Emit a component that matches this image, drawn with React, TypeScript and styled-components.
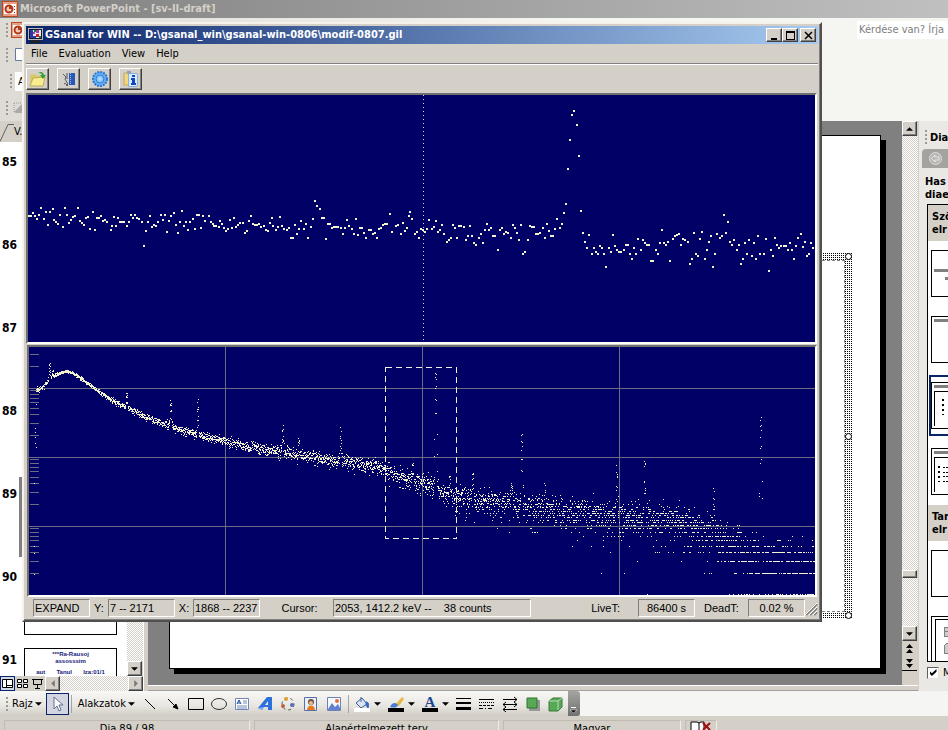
import React from "react";
import styled, { createGlobalStyle, css } from "styled-components";

const ui = `"DejaVu Sans Condensed", "DejaVu Sans", sans-serif`;
const sans = `"Liberation Sans", Arial, sans-serif`;
const face = "#d4d0c8";
const navy = "#000066";
const dot = "#f2f2cc";

const GlobalStyle = createGlobalStyle`
  * { box-sizing: border-box; }
  body { margin: 0; font: 11px/14px ${ui}; color: #000; background: ${face}; overflow: hidden; }
  button, input { font: inherit; color: inherit; margin: 0; padding: 0; border: 0; background: none; }
  svg { display: block; flex: none; }
`;

const checker = css`
  background: conic-gradient(#fff 25%, ${face} 0 50%, #fff 0 75%, ${face} 0) 0 0 / 2px 2px;
`;
const raised = css`
  background: ${face};
  border: 1px solid;
  border-color: #fff #404040 #404040 #fff;
  box-shadow: inset -1px -1px 0 #808080;
`;

/* ---------- host application ---------- */
const Screen = styled.div`
  position: relative;
  display: flex;
  flex-direction: column;
  height: 100vh;
  overflow: hidden;
`;
const HostTitle = styled.header`
  display: flex;
  align-items: center;
  gap: 2px;
  height: 18px;
  flex: none;
  padding-left: 2px;
  background: linear-gradient(90deg, #808080, #c0c0c0);
  color: ${face};
  font: bold 11px/18px ${ui};
`;
const Bars = styled.div`
  flex: none;
  display: flex;
  flex-direction: column;
  background: linear-gradient(90deg, #dedbd5, #f5f5f2 60%);
`;
const BarRow = styled.div<{ $h: number; $indent: number }>`
  display: flex;
  align-items: center;
  height: ${(p) => p.$h}px;
  padding-left: ${(p) => p.$indent}px;
  gap: 3px;
`;
const Grip = styled.span`
  width: 2px;
  height: 14px;
  flex: none;
  background: repeating-linear-gradient(#999 0 2px, transparent 2px 4px);
`;
const FontBox = styled.input`
  width: 90px;
  height: 19px;
  padding-left: 3px;
  background: #fff;
`;
const AskBox = styled.input`
  margin-left: auto;
  width: 91px;
  height: 18px;
  padding-left: 2px;
  background: #fff;
  font: 11px/18px ${ui};
  &::placeholder { color: #808080; opacity: 1; }
`;
const Work = styled.div`
  display: flex;
  flex: 1;
  min-height: 0;
`;
const Outline = styled.aside`
  display: flex;
  flex-direction: column;
  width: 143px;
  flex: none;
`;
const TabStrip = styled.div`
  height: 21px;
  flex: none;
  background: ${face};
  display: flex;
  align-items: center;
`;
const Tab = styled.button`
  display: flex;
  align-items: center;
  height: 21px;
`;
const ListRow = styled.div`
  display: flex;
  flex: 1;
  min-height: 0;
`;
const SlideList = styled.ol`
  list-style: none;
  flex: 1;
  margin: 0;
  padding: 8px 0 0 2px;
  background: #fff;
  overflow: hidden;
`;
const SlideItem = styled.li<{ $active?: boolean }>`
  display: flex;
  gap: 4px;
  height: 83px;
  font: bold 12px/24px ${ui};
  & > span { width: 18px; flex: none; }
  & > div { box-shadow: ${(p) => (p.$active ? "0 0 0 5px #808080" : "none")}; }
`;
const Thumb = styled.div`
  width: 93px;
  height: 70px;
  border: 1px solid #000;
  background: #fff;
  overflow: hidden;
  color: #20207a;
  font: bold 6px/7px ${sans};
  text-align: center;
  padding-top: 2px;
`;
const ThumbLine = styled.div<{ $gap?: boolean }>`
  display: flex;
  justify-content: space-evenly;
  margin-top: ${(p) => (p.$gap ? 4 : 0)}px;
`;
const VScroll = styled.div`
  display: flex;
  flex-direction: column;
  width: 16px;
  flex: none;
  background: ${face};
`;
const Track = styled.div<{ $len?: number }>`
  flex: ${(p) => (p.$len ? `0 0 ${p.$len}px` : "1")};
  ${checker}
`;
const ScrollButton = styled.button<{ $h?: number; $flat?: boolean; $line?: boolean }>`
  display: flex;
  align-items: center;
  justify-content: center;
  width: 15px;
  height: ${(p) => p.$h ?? 15}px;
  flex: none;
  ${raised}
  ${(p) => p.$flat && css`border: 0; box-shadow: none;`}
  ${(p) => p.$line && css`border-bottom: 1px solid #000;`}
`;
const ViewRow = styled.div`
  display: flex;
  height: 15px;
  flex: none;
  background: ${face};
`;
const ViewButton = styled.button<{ $on?: boolean }>`
  display: flex;
  align-items: center;
  justify-content: center;
  width: 15px;
  height: 15px;
  border: ${(p) => (p.$on ? "1px solid #0a246a" : "0")};
  background: ${(p) => (p.$on ? "#d2d7e4" : face)};
`;
const Center = styled.main`
  display: flex;
  flex-direction: column;
  flex: 1;
  min-width: 0;
  border-left: 1px solid #fff;
  background: ${face};
  padding-left: 4px;
`;
const StageRow = styled.div`
  display: flex;
  flex: 1;
  min-height: 0;
`;
const Stage = styled.div`
  display: flex;
  flex: 1;
  padding: 14px 21px 16px 21px;
  background: #808080;
`;
const Slide = styled.section`
  position: relative;
  flex: 1;
  background: #fff;
  border: 1px solid #000;
  box-shadow: 5px 5px 0 #000;
  clip-path: polygon(0 0, 100% 0, 100% 4px, calc(100% + 5px) 4px, calc(100% + 5px) calc(100% + 5px), 4px calc(100% + 5px), 4px 100%, 0 100%);
`;
const Placeholder = styled.div`
  position: absolute;
  left: 28px;
  right: 28px;
  top: 117px;
  bottom: 49px;
  background: conic-gradient(#000 25%, #fff 0 50%, #fff 0 75%, #fff 0) 0 0 / 2px 2px;
  padding: 7px;
`;
const PlaceholderInner = styled.div`
  height: 100%;
  background: #fff;
  border: 1px dashed #808080;
`;
const Handle = styled.i<{ $at: string }>`
  position: absolute;
  right: 0;
  top: ${(p) => p.$at};
  width: 7px;
  height: 7px;
  margin-top: -3px;
  border: 1px solid #000;
  border-radius: 50%;
  background: #fff;
`;
const Ledge = styled.div`
  height: 6px;
  flex: none;
  border-top: 1px solid #fff;
  border-bottom: 1px solid #a0a0a0;
  background: ${face};
`;
const TaskPane = styled.aside`
  width: 30px;
  flex: none;
  overflow: hidden;
  background: #eae8e4;
  padding-left: 3px;
  border-left: 1px solid #d4d0c8;
  font: bold 11px/13px ${ui};
  white-space: nowrap;
`;
const PaneTitle = styled.div`
  display: flex;
  align-items: center;
  gap: 3px;
  height: 28px;
  padding: 4px 0 0 3px;
`;
const PaneNav = styled.div`
  height: 19px;
  display: flex;
  align-items: center;
  padding-left: 7px;
  background: #a5a39f;
  border-top-left-radius: 4px;
`;
const PaneLabel = styled.div`
  padding: 7px 0 3px 3px;
  height: 36px;
`;
const PaneList = styled.div`
  margin-left: 5px;
  height: 458px;
  border: 1px solid #000;
  border-right: 0;
  background: #fff;
  display: flex;
  flex-direction: column;
  overflow: hidden;
`;
const PaneHead = styled.div<{ $gap?: number }>`
  height: 36px;
  flex: none;
  margin-top: ${(p) => p.$gap ?? 0}px;
  padding: 5px 0 0 4px;
  background: ${face};
`;
const Layout = styled.button<{ $gap: number; $on?: boolean }>`
  flex: none;
  display: block;
  width: 40px;
  height: ${(p) => (p.$on ? 61 : 47)}px;
  margin: ${(p) => p.$gap}px 0 0 ${(p) => (p.$on ? 1 : 3)}px;
  border: ${(p) => (p.$on ? "2px solid #0a246a" : "0")};
  padding: ${(p) => (p.$on ? "5px 0 5px 0" : "0")};
  overflow: hidden;
`;
const PaneCheck = styled.label`
  display: flex;
  align-items: center;
  gap: 4px;
  padding: 4px 0 0 5px;
  font: 11px/13px ${ui};
  input {
    appearance: none;
    width: 12px;
    height: 12px;
    flex: none;
    background: #fff;
    border: 1px solid;
    border-color: #606060 #e0e0e0 #e0e0e0 #606060;
    display: grid;
    place-items: center;
  }
  input:checked::before {
    content: "";
    width: 7px;
    height: 7px;
    background: #000;
    clip-path: polygon(0 30%, 35% 60%, 100% 0, 100% 40%, 35% 100%, 0 65%);
  }
`;

const DrawBar = styled.div`
  display: flex;
  flex: none;
  height: 25px;
  background: #f5f5f3;
`;
const DrawTools = styled.div`
  display: flex;
  align-items: center;
  padding-left: 6px;
  background: linear-gradient(#f8f8f6, #e8e6e1 60%, #d0ccc4);
`;
const TextTool = styled.button`
  display: flex;
  align-items: center;
  gap: 2px;
  height: 22px;
  padding: 0 4px;
  font: 11px/22px ${ui};
  white-space: nowrap;
`;
const Tool = styled.button<{ $on?: boolean; $w?: number }>`
  display: flex;
  align-items: center;
  justify-content: center;
  gap: 4px;
  width: ${(p) => p.$w ?? 23}px;
  height: 22px;
  flex: none;
  border: ${(p) => (p.$on ? "1px solid #0a246a" : "0")};
  background: ${(p) => (p.$on ? "#d3d6e0" : "none")};
`;
const Rule = styled.span`
  width: 1px;
  height: 18px;
  margin: 0 2px;
  background: #a8a6a0;
`;
const EndCap = styled.button`
  display: flex;
  align-items: flex-end;
  justify-content: center;
  width: 12px;
  height: 25px;
  padding-bottom: 2px;
  background: linear-gradient(#a5a5a0, #707070);
  border-radius: 0 3px 3px 0;
`;
const HostStatus = styled.footer`
  display: flex;
  gap: 4px;
  flex: none;
  height: 14px;
  overflow: hidden;
  padding: 4px 0 0 4px;
  background: ${face};
`;
const StatusCell = styled.div<{ $w: number }>`
  width: ${(p) => p.$w}px;
  height: 20px;
  flex: none;
  border: 1px solid;
  border-color: #c0bcb4 #f0eeea #f0eeea #c0bcb4;
  text-align: center;
  line-height: 15px;
  display: flex;
  justify-content: center;
`;

/* ---------- analyser window ---------- */
const Window = styled.section`
  position: absolute;
  left: 22px;
  top: 22px;
  width: calc(100vw - 148px);
  padding: 2px;
  background: ${face};
  border: 2px solid;
  border-color: #f4f2ea #505050 #505050 #f4f2ea;
  box-shadow: inset -1px -1px 0 #808080;
`;
const WinTitle = styled.header`
  display: flex;
  align-items: center;
  gap: 2px;
  height: 18px;
  padding: 0 2px;
  background: linear-gradient(90deg, #0a246a, #a6caf0);
  color: #fff;
  font: bold 11px/18px ${ui};
`;
const WinName = styled.span`
  flex: 1;
  white-space: nowrap;
`;
const Caption = styled.button<{ $apart?: boolean }>`
  display: flex;
  align-items: center;
  justify-content: center;
  width: 16px;
  height: 14px;
  margin-left: ${(p) => (p.$apart ? 2 : 0)}px;
  ${raised}
`;
const CaptionGroup = styled.div`
  display: flex;
`;
const Menu = styled.nav`
  display: flex;
  height: 20px;
  border-bottom: 1px solid #808080;
  font: 11px/20px ${ui};
`;
const MenuItem = styled.button`
  padding: 0 6px 0 5px;
`;
const Tools = styled.div`
  display: flex;
  align-items: center;
  gap: 8px;
  height: 29px;
  border-top: 1px solid #fff;
`;
const BigTool = styled.button`
  display: flex;
  align-items: center;
  justify-content: center;
  width: 23px;
  height: 22px;
  ${raised}
`;
const PlotFrame = styled.div<{ $inset?: boolean }>`
  margin: 0 1px 1px ${(p) => (p.$inset ? 1 : 0)}px;
  border: 2px solid;
  border-color: #707070 #fff #fff #707070;
  background: ${navy};
`;
const Plot = styled.svg`
  width: 100%;
  shape-rendering: crispEdges;
`;
const WinStatus = styled.footer`
  display: flex;
  align-items: center;
  height: 20px;
  padding: 0 0 0 7px;
  font: 11px/16px ${sans};
`;
const Field = styled.output<{ $w: number; $center?: boolean }>`
  width: ${(p) => p.$w}px;
  height: 18px;
  flex: none;
  padding-left: ${(p) => (p.$center ? 0 : 1)}px;
  text-align: ${(p) => (p.$center ? "center" : "left")};
  border: 1px solid;
  border-color: #808080 #fff #fff #808080;
  white-space: pre;
`;
const FieldLabel = styled.label<{ $w?: number }>`
  flex: ${(p) => (p.$w ? `0 0 ${p.$w}px` : "1")};
  padding-right: ${(p) => (p.$w ? 0 : 18)}px;
  text-align: ${(p) => (p.$w ? "center" : "right")};
`;

/* Upper plot: expanded region, points in thirds of a pixel. */
const leftHalf =
  "85,288 91,288 98,279 104,288 110,297 116,285 122,264 131,297 137,276 143,315 149,276 156,267 161,300 167,306 173,312 179,285 188,321 194,264 200,285 206,309 212,300 218,291 224,290 233,264 239,303 245,309 251,315 257,296 263,291 269,327 276,276 284,330 290,294 296,294 302,288 308,303 314,300 320,306 330,330 335,318 341,291 347,318 353,296 359,306 365,306 371,306 380,318 386,306 392,285 398,294 404,287 410,296 416,297 425,306 431,378 437,333 443,306 449,288 455,321 461,315 467,318 473,306 481,285 487,300 494,285 500,336 506,303 512,290 521,279 527,315 533,339 539,306 545,273 551,318 557,306 563,330 569,306 578,297 584,327 590,285 596,287 602,324 608,288 614,303 624,288 630,306 636,312 641,318 647,320 654,321 657,303 663,312 669,324 675,333 681,327 687,300 693,324 699,296 705,321 711,315 717,309 726,309 732,339 738,333 744,303 750,288 756,312 762,315 768,315 774,312 780,321 789,318 795,330 801,333 807,309 815,294 818,318 827,330 833,321 839,291 845,318 851,327 860,330 866,324 872,354 878,354 884,315 890,342 896,327 902,303 911,327 917,312 923,354 930,321 936,297 942,243 948,258 957,267 963,294 969,296 975,357 981,312 987,312 993,326 999,321 1005,321 1012,321 1020,326 1026,342 1032,324 1038,300 1044,318 1053,327 1059,342 1065,297 1071,345 1077,326 1083,326 1089,339 1095,354 1104,330 1110,330 1116,342 1122,339 1128,354 1134,327 1140,326 1146,315 1152,312 1160,312 1167,282 1173,336 1185,318 1191,317 1200,342 1206,309 1212,333 1218,324 1224,288";
const rightHalf =
  "1,366 6,387 15,432 21,426 27,444 33,417 39,422 45,426 51,417 57,390 66,417 72,411 78,393 84,426 90,420 96,405 102,432 111,456 117,450 123,444 129,405 135,414 141,444 147,408 153,408 162,411 168,450 174,438 180,408 186,438 192,459 198,465 207,444 213,432 219,459 225,420 231,402 237,420 243,414 249,438 257,438 264,480 270,420 276,414 282,432 288,426 294,429 303,444 309,405 315,414 321,429 327,450 333,405 339,492 345,486 354,450 360,408 366,413 372,413 378,432 384,432 390,429 399,414 405,444 411,402 417,423 423,438 429,438 435,417 441,387 450,414 456,402 462,369 468,342 474,237 480,150 486,75 492,63 501,105 507,198 513,363 519,429 525,456 531,474 537,435 546,492 552,474 558,486 564,492 570,468 576,474 582,492 588,531 597,474 603,486 609,435 615,468 621,480 627,486 633,486 642,480 648,465 654,465 660,492 666,507 672,474 678,492 684,447 693,480 699,450 705,459 711,465 717,465 723,513 729,513 738,480 744,492 750,459 756,420 762,459 768,465 774,456 780,513 789,447 795,438 801,435 807,432 813,465 819,447 825,450 834,456 840,522 846,507 852,429 858,492 864,498 870,447 876,426 885,507 891,480 897,456 903,438 909,531 915,492 921,432 930,444 936,438 942,375 948,429 954,396 960,456 966,465 972,450 981,480 987,465 993,522 999,507 1005,459 1011,492 1017,450 1026,498 1032,459 1038,507 1044,438 1050,492 1062,492 1068,447 1077,543 1083,480 1089,498 1095,444 1101,465 1107,474 1113,468 1122,468 1128,468 1134,480 1140,459 1146,480 1152,507 1158,468 1164,444 1173,432 1179,472 1185,456 1191,498 1197,492 1203,459 1209,474";

const dotsFrom = (src: string, dx: number, dy: number) =>
  src
    .split(" ")
    .map((pair) => {
      const [x, y] = pair.split(",").map(Number);
      return `M${Math.floor(x / 3) + dx} ${Math.floor(y / 3) + dy}h2v2h-2z`;
    })
    .join("");
const expandedPath = dotsFrom(leftHalf, -28, 24) + dotsFrom(rightHalf, 381, -6);

/* Lower plot: 4096 channels on a logarithmic count axis, 69px per decade. */
const DECADE = 69;
const BASE = 248;
const yOf = (n: number) => Math.round(BASE - DECADE * Math.log10(n)) - 1;
const countsAt = (y: number) => Math.pow(10, (BASE - y) / DECADE);

const continuum: [number, number][] = [
  [8, 43], [11, 43], [16, 38], [21, 33], [28, 28], [36, 25], [43, 26], [51, 31], [61, 38], [71, 46],
  [86, 55], [101, 63], [116, 70], [131, 76], [151, 83], [171, 89], [196, 95], [221, 100], [251, 105],
  [281, 111], [311, 115], [346, 119], [356, 124], [371, 130], [391, 136], [409, 142], [414, 148],
  [431, 150], [451, 154], [471, 157], [491, 160], [531, 165], [571, 168], [611, 173], [651, 175],
  [671, 181], [691, 192], [711, 204], [729, 213], [745, 221], [786, 229],
];
const peaks: [number, number][] = [
  [21, 18], [24, 24], [98, 47], [142, 55], [169, 56], [254, 81], [270, 94], [312, 86], [384, 115],
  [407, 27], [421, 128], [444, 130], [493, 90], [483, 136], [516, 142], [588, 125], [616, 117],
  [685, 148], [732, 73],
];
const background = (x: number) => {
  for (let i = 1; i < continuum.length; i++) {
    const [x1, y1] = continuum[i];
    if (x <= x1) {
      const [x0, y0] = continuum[i - 1];
      return countsAt(y0 + ((y1 - y0) * (x - x0)) / (x1 - x0));
    }
  }
  return 2;
};
const makeSpectrum = () => {
  let seed = 20806;
  const rnd = () => {
    seed = (seed * 1664525 + 1013904223) % 4294967296;
    return (seed + 1) / 4294967297;
  };
  let d = "";
  for (let ch = 40; ch < 4086; ch++) {
    const x = ch * 0.1923;
    const floor = background(x);
    let mean = floor;
    for (const [px, py] of peaks) {
      const t = (x - px) / 0.5;
      if (Math.abs(t) < 4) mean += Math.max(0, countsAt(py) - floor) * Math.exp((-t * t) / 2);
    }
    const g = Math.sqrt(-2 * Math.log(rnd())) * Math.cos(2 * Math.PI * rnd());
    const n = Math.round(mean + g * Math.sqrt(mean) * 1.05);
    if (n >= 1) d += `M${Math.floor(x)} ${yOf(n)}h1v1h-1z`;
  }
  for (const [x, y] of [[5, 136], [5, 199], [5, 206], [5, 227], [6, 81], [6, 85], [6, 90], [6, 96], [7, 57], [7, 100]])
    d += `M${x} ${y}h1v1h-1z`;
  return d;
};
const spectrumPath = makeSpectrum();
const ticks = [0, 1, 2, 3].flatMap((dec) => [2, 3, 4, 5, 6, 7, 8, 9].map((k) => yOf(k * 10 ** dec))).filter((y) => y > 3);

/* ---------- icons ---------- */
const Caret = ({ dir = "down" }: { dir?: "down" | "up" | "left" | "right" }) => {
  const d = { down: "M0 0h6L3 3z", up: "M0 3h6L3 0z", left: "M3 0v6L0 3z", right: "M0 0v6l3-3z" }[dir];
  const tall = dir === "left" || dir === "right";
  return (
    <svg width={tall ? 4 : 7} height={tall ? 7 : 4} viewBox={tall ? "0 0 3 6" : "0 0 6 3"}>
      <path d={d} fill={tall ? "#777" : "#000"} />
    </svg>
  );
};
const PptIcon = () => (
  <svg width="16" height="16" viewBox="0 0 16 16">
    <rect x="0.5" y="0.5" width="15" height="15" fill="#e8a088" stroke="#b84820" />
    <rect x="2" y="3" width="12" height="10" fill="#fff" />
    <circle cx="7" cy="8" r="3.500" fill="#f4c8b8" stroke="#b03818" strokeWidth="2" />
    <path d="M7 8V4l4 4z" fill="#b03818" />
    <path d="M12.500 5v7" stroke="#803018" strokeDasharray="1 2" />
  </svg>
);
const MonitorIcon = () => (
  <svg width="15" height="16" viewBox="0 0 15 16" shapeRendering="crispEdges">
    <path d="M0 1h15v12H0z" fill="#b8b8b8" />
    <path d="M1 2h13v10H1z" fill="#181830" />
    <path d="M2 3h11v8H2z" fill="#e8e8f0" />
    <path d="M2 3h3v8H2zM5 9h3v2H5z" fill="#2838a8" />
    <path d="M8 3h3v3H8zM5 5h2v2H5z" fill="#a040a0" />
    <path d="M8 7h3v3H8z" fill="#d02020" />
    <path d="M6 3h2v2H6zM11 9h2v2h-2z" fill="#108040" />
    <path d="M5 13h5v1H5zM2 14h11v2H2z" fill="#202020" />
  </svg>
);
const OpenIcon = () => (
  <svg width="18" height="18" viewBox="0 0 18 18">
    <path d="M1 5l5-1 2 2h5v10H2z" fill="#d8c868" />
    <path d="M1 16L4 8l12-1-2 9z" fill="#f8ee90" stroke="#c0aa50" />
    <path d="M9 3c3-2 5-1 6 2h2l-3 4-3-4h2c-1-2-2-2-4-2z" fill="#30a030" />
  </svg>
);
const CalibIcon = () => (
  <svg width="16" height="16" viewBox="0 0 16 16">
    <rect x="8" y="2" width="6" height="12" fill="#2858b8" />
    <path d="M9.500 2v12" stroke="#a8c0f0" strokeDasharray="1 1" />
    <path d="M2 3l3 3-1 2 3 5M3 13l2-1M6 2v6" stroke="#556" fill="none" />
    <circle cx="6" cy="14" r="1" fill="#334" />
  </svg>
);
const GearIcon = () => (
  <svg width="18" height="18" viewBox="0 0 18 18">
    <circle cx="9" cy="9" r="7" fill="#68b0f4" stroke="#2878d8" strokeWidth="2" strokeDasharray="2 1" />
    <circle cx="9" cy="9" r="4" fill="#88c4f8" stroke="#3080d8" />
    <path d="M7 9h4M9 7v4" stroke="#c0e0ff" />
  </svg>
);
const InfoIcon = () => (
  <svg width="18" height="18" viewBox="0 0 18 18">
    <path d="M2 3h7v12H2z" fill="#f0d880" stroke="#c8a850" />
    <path d="M6.500 3.500h9v13h-9z" fill="#d8ecfc" stroke="#88b0d8" />
    <path d="M5 1h4v3H5z" fill="#90a0c0" />
    <path d="M10 5h3v2h-3zM9 8h4v5h1v2H9v-2h1v-3H9z" fill="#1048c0" />
  </svg>
);
const shapes: Record<string, React.ReactNode> = {
  cursor: <path d="M5 1v12l3-3 2 5 2-1-2-5h4z" fill="#fff" stroke="#607090" />,
  line: <path d="M3 3l10 10" stroke="#000" />,
  arrow: <path d="M3 3l8 8M13 13l-5-2 3-3z" stroke="#000" />,
  rect: <path d="M.5 2.500h15v11H.5z" fill="none" stroke="#000" />,
  oval: <ellipse cx="8" cy="8" rx="7.500" ry="5.500" fill="none" stroke="#333" />,
  text: (
    <>
      <path d="M1.500 2.500h13v11h-13z" fill="#fff" stroke="#7088b8" />
      <path d="M3 8l2-4 2 4M4 7h2" fill="none" stroke="#1040a0" />
      <path d="M9 5h4M9 7h4M3 10h10M3 12h10" stroke="#7088b8" />
    </>
  ),
  wordart: (
    <>
      <path d="M1 12L10 1h5v13h-4v-3H7l-2 3zM8 9h3V5z" fill="#2c70dc" fillRule="evenodd" />
      <path d="M1 12l4 2 2-3" fill="#80b0f0" />
    </>
  ),
  cycle: (
    <>
      <circle cx="8" cy="8" r="6" fill="none" stroke="#555" strokeDasharray="3 3" />
      <circle cx="6" cy="3" r="2" fill="#e0a030" />
      <circle cx="3" cy="10" r="2" fill="#c06040" />
      <circle cx="12" cy="9" r="2" fill="#5070b8" />
    </>
  ),
  clip: (
    <>
      <path d="M1.500 1.500h12v13h-12z" fill="#e8eef8" stroke="#5870a8" />
      <circle cx="8" cy="6" r="3" fill="#705038" />
      <circle cx="8" cy="7" r="2" fill="#e8b890" />
      <path d="M4 14c0-6 8-6 8 0z" fill="#e87820" />
    </>
  ),
  picture: (
    <>
      <path d="M1.500 1.500h13v13h-13z" fill="#f4f8ff" stroke="#7080b0" />
      <path d="M2 13l4-6 3 4 3-3 2 4v2H2z" fill="#6080d0" />
      <circle cx="11" cy="5" r="2" fill="#e07040" />
    </>
  ),
  bucket: (
    <>
      <path d="M2 7l6-5 5 6-6 4z" fill="#d8e4f4" stroke="#405888" />
      <path d="M7 1v5M12 6c3 0 3 3 2 6-2-2-2-4-2-6z" fill="#3868c0" stroke="#3868c0" />
      <path d="M0 12h16v4H0z" fill="#fff" />
    </>
  ),
  brush: (
    <>
      <path d="M8 8l6-7 2 2-5 7z" fill="#e8b840" />
      <path d="M2 11c2-5 6-5 8-2-1 3-4 3-8 2z" fill="#4878d0" />
      <path d="M0 12h16v4H0z" />
    </>
  ),
  fontcolor: (
    <>
      <text x="8" y="11" textAnchor="middle" fontFamily="Liberation Serif, serif" fontWeight="bold" fontSize="15" fill="#1f4890">A</text>
      <path d="M0 12h16v4H0z" />
    </>
  ),
  weight: (
    <g fill="#000" shapeRendering="crispEdges">
      <path d="M0 2h15v1H0zM0 6h15v2H0zM0 11h15v3H0z" />
    </g>
  ),
  dash: (
    <g stroke="#000" shapeRendering="crispEdges">
      <path d="M0 3.500h15" />
      <path d="M0 6.500h15" strokeDasharray="1 1" />
      <path d="M0 9.500h15" strokeDasharray="3 1" />
      <path d="M0 12.500h15" strokeDasharray="4 2 1 2" />
    </g>
  ),
  arrows: <path d="M1 3.500h14M12 1l3 2.500L12 6M1 8.500h14M12 6l3 2.500L12 11M4 6L1 8.500 4 11M1 13.500h14M4 11l-3 2.500L4 16" fill="none" stroke="#000" />,
  shadow: (
    <>
      <path d="M4 4h11v11H4z" fill="#999" />
      <path d="M2 2h10v10H2z" fill="#58a858" stroke="#287828" />
    </>
  ),
  cube: (
    <>
      <path d="M1 5l4-3h9v9l-4 4H1z" fill="#58a858" stroke="#387838" />
      <path d="M1 5h9v9M10 5l4-3" fill="none" stroke="#b0e0b0" />
    </>
  ),
};
const Shape = ({ name }: { name: string }) => (
  <svg width="16" height="16" viewBox="0 0 16 16">{shapes[name]}</svg>
);

const LayoutArt = ({ kind }: { kind: "title" | "head" | "bullets" | "columns" | "blank" | "content" }) => (
  <svg width="60" height="47" viewBox="0 0 60 47" shapeRendering="crispEdges">
    <path d="M.5.5h59v46H.5z" fill="#fff" stroke="#000" />
    {kind === "title" && <path d="M3 20h50M14 28h30" stroke="#808080" strokeWidth="3" />}
    {(kind === "head" || kind === "bullets" || kind === "columns") && <path d="M3 4.500h52" stroke="#808080" strokeWidth="3" />}
    {(kind === "bullets" || kind === "columns") && <path d="M3.500 44V9.500H58" fill="none" stroke="#000" />}
    {kind === "bullets" && <path d="M12 17v16" stroke="#000" strokeWidth="2" strokeDasharray="2 3" />}
    {kind === "columns" && (
      <>
        <path d="M8 18v16" stroke="#000" strokeWidth="2" strokeDasharray="2 3" />
        <path d="M12 19h12M12 24h12M12 28h12M12 33h12" stroke="#000" strokeDasharray="2 1" />
      </>
    )}
    {kind === "content" && (
      <>
        <path d="M4.500 46V3.500H59" fill="none" stroke="#000" />
        <path d="M13 11h9v9h-9zM13 15h9M13 37v-7l3-3h5v10z" fill="#ccc" stroke="#808080" />
      </>
    )}
  </svg>
);

const bigTools = [
  ["Open", <OpenIcon />],
  ["Calibrate", <CalibIcon />],
  ["Settings", <GearIcon />],
  ["Info", <InfoIcon />],
] as const;

export default function App() {
  return (
    <Screen>
      <GlobalStyle />
      <HostTitle>
        <PptIcon />
        Microsoft PowerPoint - [sv-II-draft]
      </HostTitle>
      <Bars>
        <BarRow $h={24} $indent={6}>
          <Grip />
          <PptIcon />
          <AskBox aria-label="Help" placeholder="Kérdése van? Írja" />
        </BarRow>
        <BarRow $h={26} $indent={6}>
          <Grip />
          <svg width="14" height="16" viewBox="0 0 14 16">
            <path d="M4.500 1.500h9v12h-9z" fill="#fff" stroke="#6078a8" />
          </svg>
        </BarRow>
        <BarRow $h={26} $indent={10}>
          <Grip />
          <FontBox aria-label="Font" defaultValue="A" />
        </BarRow>
        <BarRow $h={27} $indent={6}>
          <Grip />
          <svg width="14" height="16" viewBox="0 0 14 16">
            <path d="M3 3h10M3 3v9" stroke="#999" strokeDasharray="1 1" />
            <path d="M3 12l8-8v9H5z" fill="#aaa" />
          </svg>
        </BarRow>
      </Bars>

      <Work>
        <Outline>
          <TabStrip>
            <Tab>
              <svg width="14" height="21" viewBox="0 0 14 21">
                <path d="M0 20.500L8 3.500h6" fill="none" stroke="#606060" />
              </svg>
              V.
            </Tab>
          </TabStrip>
          <ListRow>
            <SlideList>
              {[85, 86, 87, 88, 89, 90, 91].map((n) => (
                <SlideItem key={n} $active={n === 89}>
                  <span>{n}</span>
                  <Thumb>
                    {n === 91 && (
                      <>
                        <ThumbLine>***Ra-Rausoj</ThumbLine>
                        <ThumbLine>assosssim</ThumbLine>
                        <ThumbLine $gap>
                          <span>aut</span>
                          <span>Tanul</span>
                          <span>Iza:01/1</span>
                        </ThumbLine>
                      </>
                    )}
                  </Thumb>
                </SlideItem>
              ))}
            </SlideList>
            <VScroll>
              <Track />
              <ScrollButton aria-label="Down"><Caret /></ScrollButton>
            </VScroll>
          </ListRow>
          <ViewRow>
            <ViewButton $on aria-label="Normal view">
              <svg width="11" height="11" viewBox="0 0 11 11"><path d="M.5 1.500h10v8H.5zM4.500 1v9M5 7.500h6" fill="#fff" stroke="#000" /></svg>
            </ViewButton>
            <ViewButton aria-label="Sorter view">
              <svg width="11" height="11" viewBox="0 0 11 11"><path d="M.5 1.500h4v3h-4zM6.500 1.500h4v3h-4zM.5 6.500h4v3h-4zM6.500 6.500h4v3h-4z" fill="#fff" stroke="#000" /></svg>
            </ViewButton>
            <ViewButton aria-label="Slide show">
              <svg width="11" height="11" viewBox="0 0 11 11"><path d="M0 1.500h11M1.500 2v4.500h8V2M5.500 7v3M3 10.500h5" fill="none" stroke="#000" /></svg>
            </ViewButton>
            <ScrollButton aria-label="Left"><Caret dir="left" /></ScrollButton>
            <Track />
            <ScrollButton aria-label="Right"><Caret dir="right" /></ScrollButton>
          </ViewRow>
        </Outline>

        <Center>
          <StageRow>
            <Stage>
              <Slide>
                <Placeholder>
                  <PlaceholderInner />
                  <Handle $at="3px" />
                  <Handle $at="50%" />
                  <Handle $at="calc(100% - 4px)" />
                </Placeholder>
              </Slide>
            </Stage>
            <VScroll>
              <ScrollButton aria-label="Up"><Caret dir="up" /></ScrollButton>
              <Track />
              <ScrollButton $h={8} aria-label="Position" />
              <Track $len={48} />
              <ScrollButton aria-label="Down"><Caret /></ScrollButton>
              <ScrollButton $flat aria-label="Previous slide">
                <svg width="7" height="9" viewBox="0 0 7 9"><path d="M0 4h7L3.500 0zM0 9h7L3.500 5z" /></svg>
              </ScrollButton>
              <ScrollButton $flat $line aria-label="Next slide">
                <svg width="7" height="9" viewBox="0 0 7 9"><path d="M0 0h7L3.500 4zM0 5h7L3.500 9z" /></svg>
              </ScrollButton>
              <ScrollButton $flat $h={14} aria-hidden />
            </VScroll>
          </StageRow>
          <Ledge />
        </Center>

        <TaskPane>
          <PaneTitle><Grip />Dia</PaneTitle>
          <PaneNav>
            <svg width="13" height="13" viewBox="0 0 13 13">
              <circle cx="6.500" cy="6.500" r="6" fill="#b8b6b2" stroke="#ddd" />
              <path d="M10 5H6V3L2.500 6.500 6 10V8h4z" fill="none" stroke="#e8e8e8" />
            </svg>
          </PaneNav>
          <PaneLabel>Has<br />diae</PaneLabel>
          <PaneList>
            <PaneHead>Szö<br />elr</PaneHead>
            <Layout $gap={9} aria-label="Title"><LayoutArt kind="title" /></Layout>
            <Layout $gap={19} aria-label="Title only"><LayoutArt kind="head" /></Layout>
            <Layout $gap={12} $on aria-label="Title and text"><LayoutArt kind="bullets" /></Layout>
            <Layout $gap={12} aria-label="Two columns"><LayoutArt kind="columns" /></Layout>
            <PaneHead $gap={10}>Tar<br />elr</PaneHead>
            <Layout $gap={9} aria-label="Blank"><LayoutArt kind="blank" /></Layout>
            <Layout $gap={19} aria-label="Content"><LayoutArt kind="content" /></Layout>
          </PaneList>
          <PaneCheck><input type="checkbox" defaultChecked />M</PaneCheck>
        </TaskPane>
      </Work>

      <DrawBar>
        <DrawTools>
          <Grip />
          <TextTool>Rajz <Caret /></TextTool>
          <Tool $on aria-label="Select"><Shape name="cursor" /></Tool>
          <Rule />
          <TextTool>Alakzatok <Caret /></TextTool>
          {["line", "arrow", "rect", "oval", "text", "wordart", "cycle", "clip", "picture"].map((n) => (
            <Tool key={n} aria-label={n}><Shape name={n} /></Tool>
          ))}
          <Rule />
          {["bucket", "brush", "fontcolor"].map((n) => (
            <Tool key={n} $w={34} aria-label={n}><Shape name={n} /><Caret /></Tool>
          ))}
          {["weight", "dash", "arrows", "shadow", "cube"].map((n) => (
            <Tool key={n} aria-label={n}><Shape name={n} /></Tool>
          ))}
          <EndCap aria-label="Toolbar options">
            <svg width="7" height="7" viewBox="0 0 7 7"><path d="M1 0h5v1H1z" fill="#fff" /><path d="M0 3h7L3.500 6z" fill="#000" stroke="#fff" strokeWidth=".5" /></svg>
          </EndCap>
        </DrawTools>
      </DrawBar>
      <HostStatus>
        <StatusCell $w={246}>Dia 89 / 98</StatusCell>
        <StatusCell $w={245}>Alapértelmezett terv</StatusCell>
        <StatusCell $w={178}>Magyar</StatusCell>
        <StatusCell $w={32}>
          <svg width="22" height="16" viewBox="0 0 22 16">
            <path d="M1 1h6l2 1 2-1h3v9H1zM9 2v8" fill="#fff" stroke="#000" />
            <path d="M13 2l7 7M20 2l-7 7" stroke="#a01010" strokeWidth="2" />
          </svg>
        </StatusCell>
      </HostStatus>

      <Window>
        <WinTitle>
          <MonitorIcon />
          <WinName>GSanal for WIN -- D:\gsanal_win\gsanal-win-0806\modif-0807.gil</WinName>
          <CaptionGroup>
            <Caption aria-label="Minimize"><svg width="9" height="9" viewBox="0 0 9 9"><path d="M1 7h6v2H1z" /></svg></Caption>
            <Caption aria-label="Maximize"><svg width="9" height="9" viewBox="0 0 9 9"><path d="M0 0h9v9H0zM1 2v6h7V2z" fillRule="evenodd" /></svg></Caption>
            <Caption $apart aria-label="Close"><svg width="9" height="9" viewBox="0 0 9 9"><path d="M1 1l7 7M8 1L1 8" stroke="#000" strokeWidth="1.500" /></svg></Caption>
          </CaptionGroup>
        </WinTitle>
        <Menu>
          {["File", "Evaluation", "View", "Help"].map((m) => <MenuItem key={m}>{m}</MenuItem>)}
        </Menu>
        <Tools>
          {bigTools.map(([label, icon]) => <BigTool key={label} aria-label={label}>{icon}</BigTool>)}
        </Tools>
        <PlotFrame>
          <Plot height="247" viewBox="0 0 787 247" preserveAspectRatio="none">
            <path d="M395.500 0v247" stroke="#d8d8e8" strokeDasharray="1 3" />
            <path d={expandedPath} fill={dot} />
          </Plot>
        </PlotFrame>
        <PlotFrame $inset>
          <Plot height="248" viewBox="0 0 786 248" preserveAspectRatio="none">
            <path d="M0 41.500h786M0 110.500h786M0 179.500h786M196.500 0v248M393.500 0v248M590.500 0v248" stroke="#6c6c80" />
            <path d={ticks.map((y) => `M1 ${y + 0.5}h9`).join("")} stroke="#6c6c80" />
            <path d="M356.500 20.500h71v171h-71z" fill="none" stroke="#f0f0e0" strokeDasharray="6 4" />
            <path d={spectrumPath} fill={dot} />
          </Plot>
        </PlotFrame>
        <WinStatus>
          <Field $w={57}>EXPAND</Field>
          <FieldLabel $w={18}>Y:</FieldLabel>
          <Field $w={67}>7 -- 2171</Field>
          <FieldLabel $w={18}>X:</FieldLabel>
          <Field $w={67}>1868 -- 2237</Field>
          <FieldLabel $w={73}>&nbsp;&nbsp;Cursor:</FieldLabel>
          <Field $w={198}>{"2053, 1412.2 keV --    38 counts"}</Field>
          <FieldLabel>LiveT:</FieldLabel>
          <Field $w={57} $center>86400 s</Field>
          <FieldLabel $w={53}>DeadT:</FieldLabel>
          <Field $w={57} $center>0.02 %</Field>
          <svg width="13" height="16" viewBox="0 0 13 16">
            <path d="M1 15L12 4M5 15l7-7M9 15l3-3" stroke="#808080" strokeWidth="2" />
            <path d="M0 15L12 3M4 15l8-8M8 15l4-4" stroke="#fff" />
          </svg>
        </WinStatus>
      </Window>
    </Screen>
  );
}
